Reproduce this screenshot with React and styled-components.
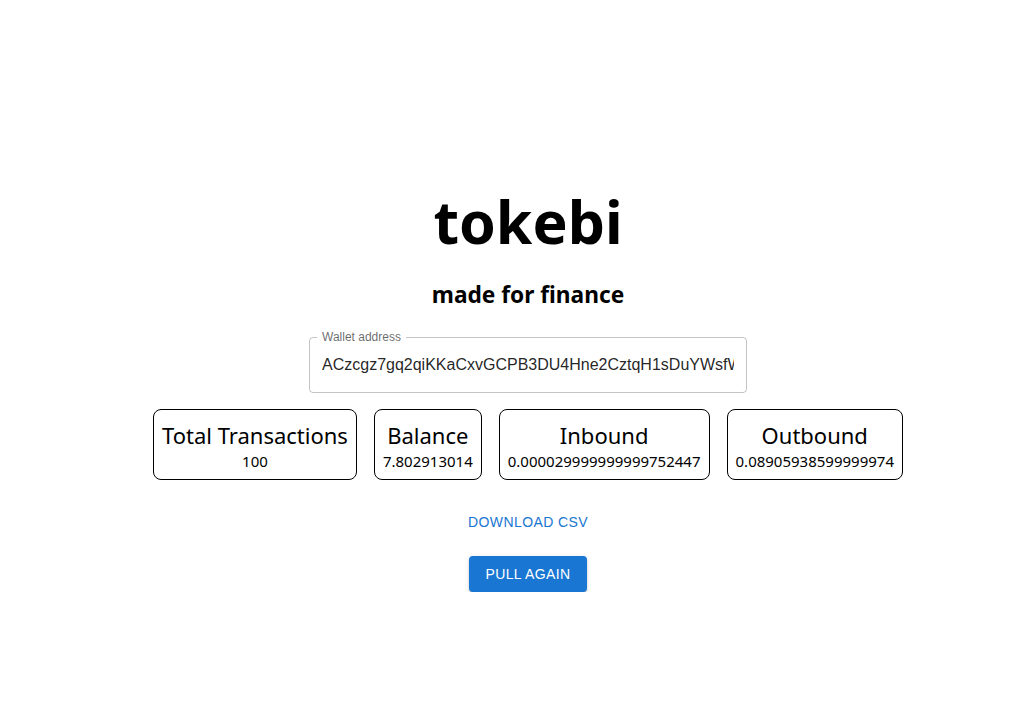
import React, { useState } from "react";
import styled, { createGlobalStyle } from "styled-components";

const GlobalStyle = createGlobalStyle`
  body {
    margin: 0;
    background: #fff;
    font-family: "Noto Sans", "Open Sans", sans-serif;
  }
`;

const Page = styled.div`
  display: flex;
  flex-direction: column;
  align-items: center;
  padding: 183px 0 0 26px;
`;

const Title = styled.h1`
  font-size: 59px;
  font-weight: 700;
  margin: 0;
  line-height: 1.3;
`;

const Subtitle = styled.h2`
  font-size: 22.7px;
  font-weight: 700;
  margin: 20px 0 22px;
  line-height: 1.3;
`;

const Field = styled.fieldset`
  width: 438px;
  height: 62px;
  box-sizing: border-box;
  margin: 0;
  padding: 0 12px;
  border: 1px solid rgba(0, 0, 0, 0.23);
  border-radius: 4px;
  legend {
    font-family: "Liberation Sans", Arial, sans-serif;
    font-size: 12px;
    color: rgba(0, 0, 0, 0.6);
    padding: 0 5px;
    margin-left: -5px;
    line-height: 12px;
  }
`;

const Input = styled.input`
  border: none;
  outline: none;
  width: 100%;
  padding: 13px 0 0;
  font-family: "Liberation Sans", Arial, sans-serif;
  font-size: 16px;
  color: rgba(0, 0, 0, 0.87);
  background: transparent;
`;

const Stats = styled.div`
  display: flex;
  gap: 17px;
  margin-top: 16px;
`;

const Card = styled.div`
  border: 1px solid #000;
  border-radius: 8px;
  padding: 9px 8px 8px;
  text-align: center;
  display: flex;
  flex-direction: column;
  align-items: center;
`;

const CardTitle = styled.div`
  font-size: 22px;
  line-height: 32px;
`;

const CardValue = styled.div`
  font-size: 15px;
  line-height: 20px;
`;

const TextButton = styled.button`
  margin-top: 28px;
  background: none;
  border: none;
  color: #1976d2;
  font-family: "Liberation Sans", Arial, sans-serif;
  font-size: 14px;
  letter-spacing: 0.02857em;
  text-transform: uppercase;
  padding: 6px 8px;
  cursor: pointer;
`;

const ContainedButton = styled.button`
  margin-top: 20px;
  background: #1976d2;
  color: #fff;
  border: none;
  border-radius: 4px;
  height: 36px;
  padding: 0 16px;
  font-family: "Liberation Sans", Arial, sans-serif;
  font-weight: 500;
  font-size: 14px;
  letter-spacing: 0.02857em;
  text-transform: uppercase;
  box-shadow: 0px 3px 1px -2px rgba(0, 0, 0, 0.2), 0px 2px 2px 0px rgba(0, 0, 0, 0.14),
    0px 1px 5px 0px rgba(0, 0, 0, 0.12);
  cursor: pointer;
`;

const stats = [
  { label: "Total Transactions", value: "100" },
  { label: "Balance", value: "7.802913014" },
  { label: "Inbound", value: "0.000029999999999752447" },
  { label: "Outbound", value: "0.08905938599999974" },
];

export default function App() {
  const [address, setAddress] = useState(
    "ACzcgz7gq2qiKKaCxvGCPB3DU4Hne2CztqH1sDuYWsfW"
  );

  return (
    <Page>
      <GlobalStyle />
      <Title>tokebi</Title>
      <Subtitle>made for finance</Subtitle>
      <Field>
        <legend>Wallet address</legend>
        <Input value={address} onChange={(e) => setAddress(e.target.value)} />
      </Field>
      <Stats>
        {stats.map((s) => (
          <Card key={s.label}>
            <CardTitle>{s.label}</CardTitle>
            <CardValue>{s.value}</CardValue>
          </Card>
        ))}
      </Stats>
      <TextButton>Download CSV</TextButton>
      <ContainedButton>Pull again</ContainedButton>
    </Page>
  );
}
